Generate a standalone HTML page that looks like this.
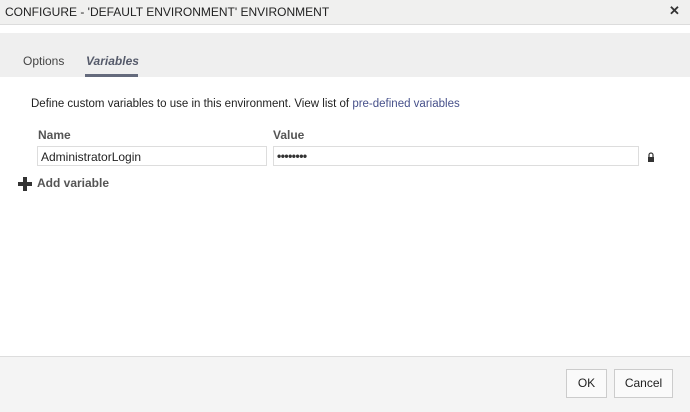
<!DOCTYPE html>
<html><head><style>
body{margin:0;width:690px;height:411px;background:#fff;font-family:"Liberation Sans",sans-serif;position:relative;overflow:hidden;color:#222}
.a{position:absolute}
</style></head><body>
<div class="a" style="left:0;top:0;width:690px;height:24px;background:#f0f0ef;border-bottom:1px solid #dcdcdc"></div>
<div class="a" style="left:5px;top:5px;font-size:12px;color:#222">CONFIGURE - 'DEFAULT ENVIRONMENT' ENVIRONMENT</div>
<div class="a" style="left:669px;top:3px;font-size:13px;font-weight:bold;color:#333">✕</div>
<div class="a" style="left:0;top:33px;width:690px;height:44px;background:#efefef"></div>
<div class="a" style="left:23px;top:54px;font-size:12px;color:#444">Options</div>
<div class="a" style="left:86px;top:54px;font-size:12px;font-weight:bold;font-style:italic;color:#555a6a">Variables</div>
<div class="a" style="left:85px;top:74px;width:53px;height:3px;background:#646a7c"></div>
<div class="a" style="left:31px;top:98px;font-size:11.5px;color:#222">Define custom variables to use in this environment. View list of <span style="color:#46508a">pre-defined variables</span></div>
<div class="a" style="left:38px;top:128px;font-size:12px;font-weight:bold;color:#555">Name</div>
<div class="a" style="left:273px;top:128px;font-size:12px;font-weight:bold;color:#555">Value</div>
<div class="a" style="left:37px;top:146px;width:230px;height:20px;border:1px solid #ddd;box-sizing:border-box;font-size:12px;padding:3px 3px">AdministratorLogin</div>
<div class="a" style="left:273px;top:146px;width:366px;height:20px;border:1px solid #ddd;box-sizing:border-box;font-size:12px;padding:2px 3px;letter-spacing:-0.5px;font-weight:bold;color:#333">••••••••</div>
<svg class="a" style="left:647px;top:152px" width="8" height="10"><path d="M2 5V3a2 2 0 0 1 4 0v2" stroke="#333" stroke-width="1.2" fill="none"/><rect x="1" y="5" width="6" height="5" fill="#333"/></svg>
<svg class="a" style="left:18px;top:177px" width="14" height="14"><rect x="5" y="0" width="4" height="14" fill="#333"/><rect x="0" y="5" width="14" height="4" fill="#333"/></svg>
<div class="a" style="left:37px;top:176px;font-size:12px;font-weight:bold;color:#555">Add variable</div>
<div class="a" style="left:0;top:356px;width:690px;height:55px;background:#f4f4f4;border-top:1px solid #ddd"></div>
<div class="a" style="left:566px;top:369px;width:41px;height:29px;border:1px solid #ccc;background:#fafafa;box-sizing:border-box;font-size:12px;text-align:center;line-height:27px">OK</div>
<div class="a" style="left:614px;top:369px;width:59px;height:29px;border:1px solid #ccc;background:#fafafa;box-sizing:border-box;font-size:12px;text-align:center;line-height:27px">Cancel</div>
</body></html>
